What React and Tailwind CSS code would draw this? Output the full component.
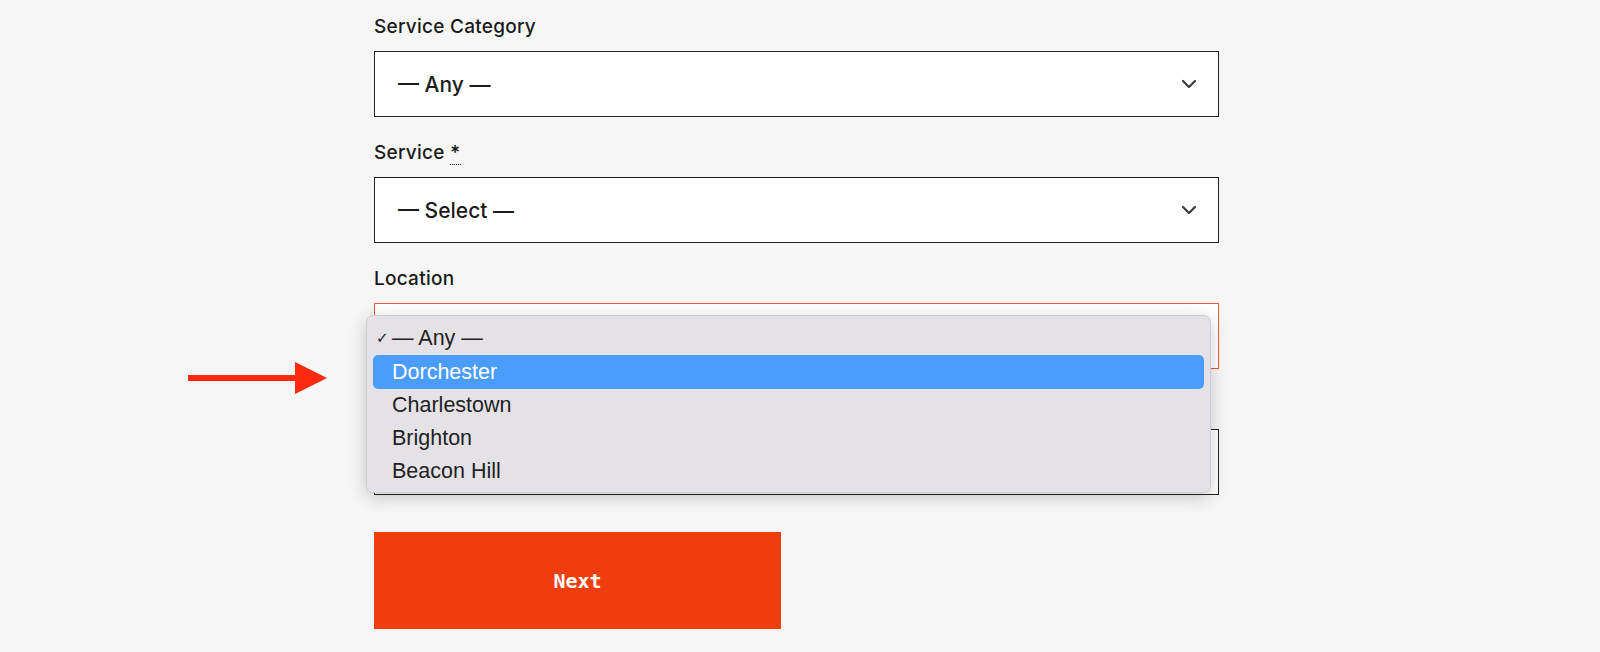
import React from "react";

function Chevron() {
  return (
    <svg width="16" height="10" viewBox="0 0 16 10" fill="none" className="shrink-0">
      <path d="M2 2 L8 8 L14 2" stroke="#3c3c3c" strokeWidth="2.2" strokeLinecap="round" strokeLinejoin="round" />
    </svg>
  );
}

function SelectBox({ value, border = "border-[#222222]", chevron = true }) {
  return (
    <div className={`h-[66px] border ${border} bg-white flex items-center justify-between pl-[23px] pr-[21px]`}>
      <span className="text-[21px] font-medium text-[#1c1c1c] leading-none" style={{ fontFamily: "Inter, 'Noto Sans', sans-serif" }}>
        {value}
      </span>
      {chevron && <Chevron />}
    </div>
  );
}

function Label({ children }) {
  return (
    <div className="h-6 mb-3 text-[19px] leading-6 font-medium tracking-[0.25px] text-[#1a1a1a]" style={{ fontFamily: "Inter, 'Noto Sans', sans-serif" }}>
      {children}
    </div>
  );
}

export default function App() {
  const options = ["Dorchester", "Charlestown", "Brighton", "Beacon Hill"];
  return (
    <div className="relative h-[652px] w-[1600px] overflow-hidden bg-[#f6f6f6]">
      <svg className="absolute left-[188px] top-[362px]" width="140" height="32" viewBox="0 0 140 32">
        <rect x="0" y="13" width="110" height="6" fill="#fd2a12" />
        <polygon points="107,0 139,16 107,32" fill="#fd2a12" />
      </svg>

      <div className="relative ml-[374px] w-[845px] pt-[15px]">
        <Label>Service Category</Label>
        <SelectBox value="— Any —" />

        <div className="mt-6">
          <Label>
            Service{" "}
            <abbr title="required" className="no-underline border-b border-dotted border-[#1a1a1a] leading-none font-semibold">
              *
            </abbr>
          </Label>
          <SelectBox value="— Select —" />
        </div>

        <div className="mt-6">
          <Label>Location</Label>
          <SelectBox value="" border="border-[#ef5a3a]" />
        </div>

        <div className="mt-6">
          <div className="h-6 mb-3" />
          <SelectBox value="" />
        </div>

        <button
          className="mt-[37px] w-[407px] h-[97px] bg-[#ef3d0b] text-white text-[20px] font-bold flex items-center justify-center"
          style={{ fontFamily: "'DejaVu Sans Mono', 'Liberation Mono', monospace" }}
        >
          Next
        </button>

        <div
          className="absolute left-[-8px] top-[315px] w-[845px] rounded-[7px] bg-[#e4e2e7] border border-[#cfcdd2] shadow-[0_4px_18px_rgba(0,0,0,0.2)] pt-[6px] pb-[4px] px-[6px]"
          style={{ fontFamily: "'Liberation Sans', Arial, sans-serif" }}
        >
          <div className="relative h-[33px] flex items-center pl-[19px] text-[21.5px] text-[#222222]">
            <span className="absolute left-[3px] text-[15px] text-[#222222]" style={{ fontFamily: "'DejaVu Sans', sans-serif" }}>✓</span>
            — Any —
          </div>
          {options.map((o, i) => (
            <div
              key={o}
              className={
                i === 0
                  ? "h-[34px] flex items-center pl-[19px] text-[21.5px] text-white bg-[#4a9dfc] rounded-[5px]"
                  : "h-[33px] flex items-center pl-[19px] text-[21.5px] text-[#222222]"
              }
            >
              {o}
            </div>
          ))}
        </div>
      </div>
    </div>
  );
}
